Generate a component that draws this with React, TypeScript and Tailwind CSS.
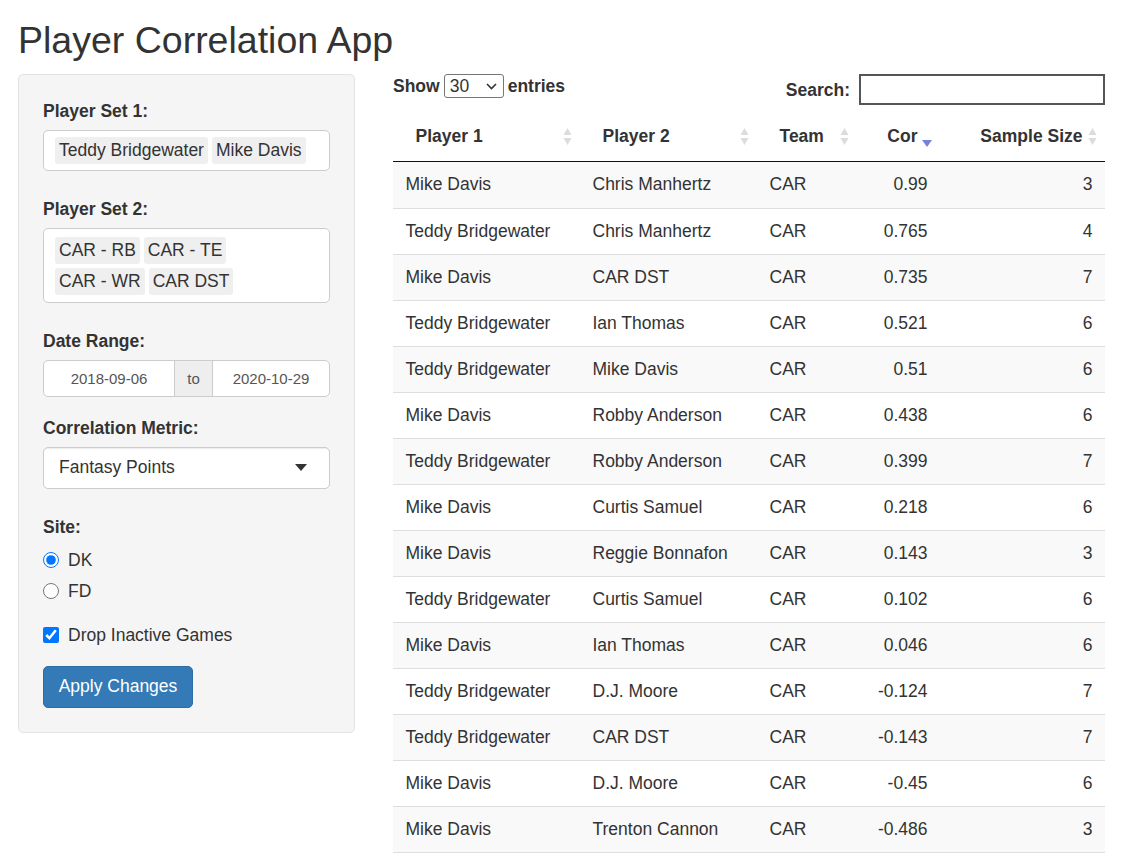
import { useState } from "react";

const rows = [
  ["Mike Davis", "Chris Manhertz", "CAR", "0.99", "3"],
  ["Teddy Bridgewater", "Chris Manhertz", "CAR", "0.765", "4"],
  ["Mike Davis", "CAR DST", "CAR", "0.735", "7"],
  ["Teddy Bridgewater", "Ian Thomas", "CAR", "0.521", "6"],
  ["Teddy Bridgewater", "Mike Davis", "CAR", "0.51", "6"],
  ["Mike Davis", "Robby Anderson", "CAR", "0.438", "6"],
  ["Teddy Bridgewater", "Robby Anderson", "CAR", "0.399", "7"],
  ["Mike Davis", "Curtis Samuel", "CAR", "0.218", "6"],
  ["Mike Davis", "Reggie Bonnafon", "CAR", "0.143", "3"],
  ["Teddy Bridgewater", "Curtis Samuel", "CAR", "0.102", "6"],
  ["Mike Davis", "Ian Thomas", "CAR", "0.046", "6"],
  ["Teddy Bridgewater", "D.J. Moore", "CAR", "-0.124", "7"],
  ["Teddy Bridgewater", "CAR DST", "CAR", "-0.143", "7"],
  ["Mike Davis", "D.J. Moore", "CAR", "-0.45", "6"],
  ["Mike Davis", "Trenton Cannon", "CAR", "-0.486", "3"],
];

function SortBoth() {
  return (
    <svg width="9" height="19" viewBox="0 0 9 19" className="absolute right-[8px] top-[15px]">
      <path d="M4.5 1 L8.5 8 L0.5 8 Z" fill="#dcdcdc" />
      <path d="M4.5 18 L8.5 11 L0.5 11 Z" fill="#dcdcdc" />
    </svg>
  );
}

function SortDesc() {
  return (
    <svg width="10" height="7" viewBox="0 0 10 7" className="absolute right-[8px] top-[28px]">
      <path d="M0 0 L10 0 L5 7 Z" fill="#7a7fd8" />
    </svg>
  );
}

function Chip({ children }: { children: string }) {
  return (
    <span className="h-[27px] leading-[27px] px-[4px] bg-[#efefef] rounded-[3px] text-[#333]">
      {children}
    </span>
  );
}

function Label({ children, className = "" }: { children: string; className?: string }) {
  return <div className={"font-bold leading-[25px] mb-[6px] " + className}>{children}</div>;
}

export default function App() {
  const [site, setSite] = useState("DK");
  const [drop, setDrop] = useState(true);

  return (
    <div
      className="min-h-screen bg-white text-[#333] text-[17.5px] leading-[25px] pl-[18px] pr-[20px]"
      style={{ fontFamily: '"Liberation Sans", Arial, sans-serif' }}
    >
      <h2 className="text-[37.5px] leading-[41px] pt-[20px] mb-[13px] font-normal">Player Correlation App</h2>

      <div className="flex gap-[38px] items-start">
        {/* sidebar */}
        <div className="w-[337px] shrink-0 bg-[#f5f5f5] border border-[#e3e3e3] rounded-[5px] p-[24px]">
          <Label>Player Set 1:</Label>
          <div className="bg-white border border-[#ccc] rounded-[5px] pt-[6px] pb-[6px] px-[11px] flex flex-wrap gap-x-[4px]">
            <Chip>Teddy Bridgewater</Chip>
            <Chip>Mike Davis</Chip>
          </div>

          <Label className="mt-[26px]">Player Set 2:</Label>
          <div className="bg-white border border-[#ccc] rounded-[5px] pt-[8px] pb-[7px] px-[11px] flex flex-col gap-[4px]">
            <div className="flex gap-x-[4px]">
              <Chip>CAR - RB</Chip>
              <Chip>CAR - TE</Chip>
            </div>
            <div className="flex gap-x-[4px]">
              <Chip>CAR - WR</Chip>
              <Chip>CAR DST</Chip>
            </div>
          </div>

          <Label className="mt-[26px]">Date Range:</Label>
          <div className="flex h-[37px] text-[15px] text-[#555] border border-[#ccc] rounded-[5px] bg-white overflow-hidden">
            <div className="w-[130px] flex items-center justify-center">2018-09-06</div>
            <div className="w-[39px] flex items-center justify-center bg-[#eee] border-x border-[#ccc]">to</div>
            <div className="flex-1 flex items-center justify-center">2020-10-29</div>
          </div>

          <Label className="mt-[18.5px]">Correlation Metric:</Label>
          <div className="h-[42px] bg-white border border-[#ccc] rounded-[5px] flex items-center justify-between pl-[15px] pr-[22px] shadow-[inset_0_1px_1px_rgba(0,0,0,0.075)]">
            <span>Fantasy Points</span>
            <svg width="12" height="7" viewBox="0 0 12 7">
              <path d="M0 0 L12 0 L6 7 Z" fill="#333" />
            </svg>
          </div>

          <Label className="mt-[26px] mb-[8px]">Site:</Label>
          <div className="flex flex-col gap-[6px]">
            {["DK", "FD"].map((s) => (
              <label key={s} className="flex items-center gap-[9px] h-[25px] cursor-pointer">
                <input
                  type="radio"
                  name="site"
                  checked={site === s}
                  onChange={() => setSite(s)}
                  className="w-[16px] h-[16px] m-0 accent-[#0075ff]"
                />
                <span>{s}</span>
              </label>
            ))}
          </div>

          <label className="flex items-center gap-[9px] h-[25px] mt-[19px] cursor-pointer">
            <input
              type="checkbox"
              checked={drop}
              onChange={() => setDrop(!drop)}
              className="w-[16px] h-[16px] m-0 accent-[#0075ff]"
            />
            <span>Drop Inactive Games</span>
          </label>

          <button className="mt-[18px] h-[42px] w-[150px] bg-[#337ab7] border border-[#2e6da4] rounded-[5px] text-white">
            Apply Changes
          </button>
        </div>

        {/* main */}
        <div className="flex-1 min-w-0">
          <div className="flex justify-between items-start">
            <div className="flex items-center font-bold h-[24px]">
              <span>Show</span>
              <div className="mx-[4px] h-[24px] w-[60px] border border-[#767676] rounded-[3px] flex items-center justify-between pl-[5px] pr-[6px] font-normal bg-white">
                <span>30</span>
                <svg width="11" height="7" viewBox="0 0 11 7">
                  <path d="M1 1 L5.5 5.5 L10 1" stroke="#333" strokeWidth="1.6" fill="none" />
                </svg>
              </div>
              <span>entries</span>
            </div>
            <div className="flex items-end font-bold">
              <span className="mb-[2px]">Search:</span>
              <div className="ml-[9px] w-[246px] h-[31px] border-2 border-[#555] bg-white" />
            </div>
          </div>

          <table className="w-full table-fixed border-collapse mt-[7px]">
            <colgroup>
              <col className="w-[187px]" />
              <col className="w-[177px]" />
              <col className="w-[100px]" />
              <col className="w-[83px]" />
              <col />
            </colgroup>
            <thead>
              <tr className="border-b border-[#111]">
                <th className="relative text-left font-bold py-[12px] pl-[22.5px] pr-[22.5px]">Player 1<SortBoth /></th>
                <th className="relative text-left font-bold py-[12px] pl-[22.5px] pr-[22.5px]">Player 2<SortBoth /></th>
                <th className="relative text-left font-bold py-[12px] pl-[22.5px] pr-[22.5px]">Team<SortBoth /></th>
                <th className="relative text-right font-bold py-[12px] pl-[10px] pr-[22.5px]">Cor<SortDesc /></th>
                <th className="relative text-right font-bold py-[12px] pl-[10px] pr-[22.5px]">Sample Size<SortBoth /></th>
              </tr>
            </thead>
            <tbody>
              {rows.map((r, i) => {
                const pad = i === 0 ? "pt-[10px] pb-[11px] " : "py-[10px] ";
                return (
                  <tr key={i} className={(i % 2 === 0 ? "bg-[#f9f9f9] " : "bg-white ") + "border-b border-[#ddd]"}>
                    <td className={pad + "px-[12.5px] whitespace-nowrap"}>{r[0]}</td>
                    <td className={pad + "px-[12.5px] whitespace-nowrap"}>{r[1]}</td>
                    <td className={pad + "px-[12.5px]"}>{r[2]}</td>
                    <td className={pad + "px-[12.5px] text-right"}>{r[3]}</td>
                    <td className={pad + "px-[12.5px] text-right"}>{r[4]}</td>
                  </tr>
                );
              })}
            </tbody>
          </table>
        </div>
      </div>
    </div>
  );
}
